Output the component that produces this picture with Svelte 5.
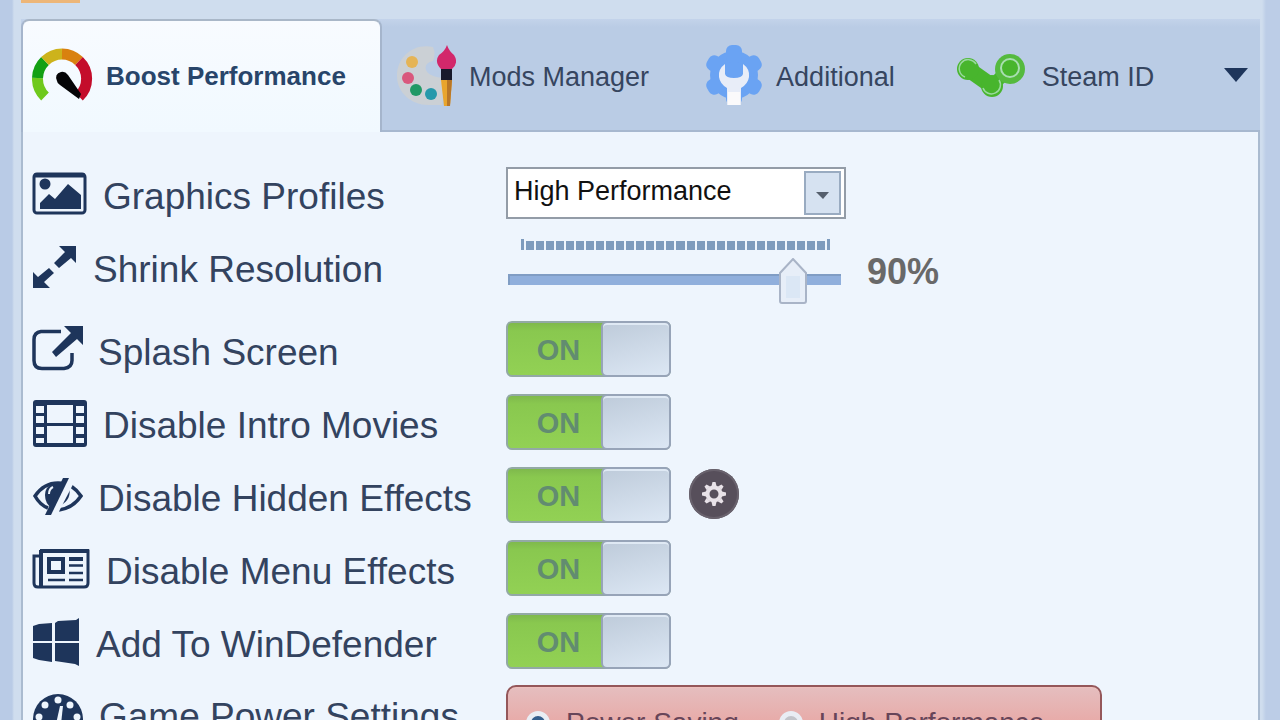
<script>
  let profile = $state('High Performance');
  let resolution = $state(90);
  let power = $state('saving');

  let toggles = $state([
    { id: 'splash', label: 'Splash Screen', icon: 'external', on: true },
    { id: 'intro', label: 'Disable Intro Movies', icon: 'film', on: true },
    { id: 'hidden', label: 'Disable Hidden Effects', icon: 'eye', on: true, settings: true },
    { id: 'menu', label: 'Disable Menu Effects', icon: 'news', on: true },
    { id: 'defender', label: 'Add To WinDefender', icon: 'windows', on: true }
  ]);

  const ticks = Array.from({ length: 32 }, (_, i) => i);
  const teeth = [0, 60, 120, 180, 240, 300];
  const cogs = [0, 45, 90, 135, 180, 225, 270, 315];
</script>

{#snippet glyph(name)}
  {#if name === 'image'}
    <svg width="56" height="44" viewBox="0 0 56 44" aria-hidden="true">
      <rect x="2" y="2" width="51" height="39" rx="3" fill="none" stroke="currentColor" stroke-width="3" />
      <path d="M2 3.500h51" stroke="currentColor" stroke-width="4" />
      <circle cx="13" cy="12" r="5.500" />
      <path d="M8 37v-6l9-9 6 5 13-15 13 11v14z" />
    </svg>
  {:else if name === 'resize'}
    <svg width="46" height="44" viewBox="0 0 46 44" aria-hidden="true">
      <path d="M27 1h17v17l-5-5-12 10-5-5 11-11zM1 43V27l5 5 11-9 5 5-10 9 6 6z" />
    </svg>
  {:else if name === 'external'}
    <svg width="51" height="47" viewBox="0 0 51 47" aria-hidden="true">
      <path d="M29 5.500H9q-7 1-7 8v21q0 8 8 8h22q8-1 8-8V27" fill="none" stroke="currentColor" stroke-width="3.500" />
      <path d="M32 0h19v19l-6-6-21 18-4-5L39 7z" />
    </svg>
  {:else if name === 'film'}
    <svg width="56" height="48" viewBox="0 0 56 48" aria-hidden="true">
      <path d="M4 1h48q3 0 3 3v41q0 3-3 3H4q-3 0-3-3V4q0-3 3-3zm0 6v7h8V7zm0 10v7h8v-7zm0 11v7h8v-7zm0 11v5h8v-5zM44 7v7h8V7zm0 10v7h8v-7zm0 11v7h8v-7zm0 11v5h8v-5zM15 6v18h26V6zm0 21v17h26V27z" fill-rule="evenodd" />
    </svg>
  {:else if name === 'eye'}
    <svg width="51" height="38" viewBox="0 0 51 38" aria-hidden="true">
      <path d="M16 31Q8 28 3 19 12 6 26 6q4 0 7 1M39 9q6 4 10 10Q41 31 27 33" fill="none" stroke="currentColor" stroke-width="3.500" />
      <path d="M31 7L20 31Q13 27 13 18q0-9 9-11z" />
      <path d="M21 10q-4 2-4 7" fill="none" stroke="#eef5fd" stroke-width="2" />
      <path d="M31 1h6L19 38h-6z" />
      <path d="M37 10q3 12-8 18z" />
      <path d="M40 6L25 35" stroke="#eef5fd" stroke-width="3" />
    </svg>
  {:else if name === 'news'}
    <svg width="59" height="42" viewBox="0 0 59 42" aria-hidden="true">
      <path d="M9 3h47v32q0 4-4 4H6q-4 0-4-4V8h6" fill="none" stroke="currentColor" stroke-width="3" />
      <path d="M9 2v37M8 3h49" fill="none" stroke="currentColor" stroke-width="4" />
      <path d="M17 11h14v13H17z" fill="none" stroke="currentColor" stroke-width="4" />
      <path d="M37 11h14" stroke="currentColor" stroke-width="4" />
      <path d="M37 17.500h14M37 25h14M16 32h17M37 32h14" stroke="currentColor" stroke-width="2.500" />
    </svg>
  {:else if name === 'windows'}
    <svg width="49" height="48" viewBox="0 0 49 48" aria-hidden="true">
      <path d="M1 8l6-2 13-1v18H1zM23 5l3-2 18-1 3-2v23H23zM1 25h19v19L7 42l-6-2zM23 25h24v23l-4-2-20-3z" />
    </svg>
  {:else if name === 'dial'}
    <svg width="52" height="60" viewBox="0 -10 52 60" aria-hidden="true">
      <circle cx="26" cy="26" r="25" />
      <g fill="#eef5fd">
        <circle cx="26" cy="7" r="3.500" />
        <circle cx="13" cy="12" r="3.500" />
        <circle cx="38" cy="12" r="3.500" />
        <circle cx="7" cy="24" r="3.500" />
        <circle cx="45" cy="24" r="3.500" />
        <path d="M28 13h3l-2 18h-5z" />
      </g>
    </svg>
  {/if}
{/snippet}

<div class="window">
  <header class="titlebar"><span class="app-mark"></span></header>

  <div class="tabs" role="tablist">
    <button class="tab active" role="tab" aria-selected="true">
      <svg width="62" height="58" viewBox="1 1 62 58" aria-hidden="true">
        <g fill="none" stroke-width="11">
          <path d="M14 49.500A24.500 24.500 0 0 1 6.500 31" stroke="#6fc91d" />
          <path d="M6.500 31A24.500 24.500 0 0 1 14 14" stroke="#13a014" />
          <path d="M14 14A24.500 24.500 0 0 1 31 7" stroke="#cdb31b" />
          <path d="M31 7A24.500 24.500 0 0 1 48 14" stroke="#d9810f" />
          <path d="M48 14A24.500 24.500 0 0 1 48 49.500" stroke="#c40d2b" />
        </g>
        <path d="M26 34q-3-7 4-9 4-1 7 3l13 19-2 5-19-14q-3-2-3-4z" fill="#050507" />
      </svg>
      <span>Boost Performance</span>
    </button>

    <button class="tab" role="tab" aria-selected="false">
      <svg width="60" height="62" viewBox="0 0 60 62" aria-hidden="true">
        <path d="M37 3C16-1 1 14 1 32c0 17 15 29 31 29h14l3-27q-16-1-19-8-2-7 7-9 3-7 0-14z" fill="#cbd0d5" />
        <circle cx="16" cy="18" r="6" fill="#e5b456" />
        <circle cx="12" cy="34" r="6" fill="#d9587d" />
        <circle cx="20" cy="46" r="6" fill="#209966" />
        <circle cx="35" cy="50" r="6" fill="#2699ab" />
        <path d="M51 1q2 6 7 10 5 8-2 14H45q-7-7-2-14 6-4 8-10z" fill="#d2286b" />
        <path d="M45 25h11v11H45z" fill="#17192b" />
        <path d="M45 36h11l-2 26h-6z" fill="#e9a52d" />
        <path d="M51 36h5l-2 26h-3z" fill="#b97728" />
      </svg>
      <span>Mods Manager</span>
    </button>

    <button class="tab" role="tab" aria-selected="false">
      <svg width="58" height="62" viewBox="0 0 58 62" aria-hidden="true">
        <g fill="#6aa3f3">
          <circle cx="29" cy="31" r="24" />
          {#each teeth as angle}
            <rect x="21" y="1" width="16" height="18" rx="6" transform="rotate({angle} 29 31)" />
          {/each}
        </g>
        <path d="M20 20v10q1 4 9 4t9-4V20q7 5 6 13-1 7-8 11v17H22V44q-7-4-8-11-1-8 6-13z" fill="#e8edf8" />
        <path d="M23 48h12v13H23z" fill="#fbfafb" />
      </svg>
      <span>Additional</span>
    </button>

    <button class="tab" role="tab" aria-selected="false">
      <svg width="78" height="48" viewBox="-5 0 78 48" aria-hidden="true">
        <g fill="none" stroke="#48b52d" stroke-width="16" stroke-linecap="round">
          <path d="M12 18l24 17" />
          <path d="M36 35l18-18" stroke-width="13" />
        </g>
        <circle cx="12" cy="18" r="11" fill="#48b52d" />
        <circle cx="36" cy="35" r="11" fill="#48b52d" />
        <circle cx="54" cy="18" r="15" fill="#55ba3e" />
        <circle cx="54" cy="17" r="9" fill="#48b52d" stroke="#a8deb1" stroke-width="2" />
        <path d="M20 13A9 9 0 1 0 9 26M27 37A9 9 0 1 0 43 29" fill="none" stroke="#9bd9a0" stroke-width="1.500" />
      </svg>
      <span>Steam ID</span>
    </button>

    <button class="more" aria-label="More tabs">
      <svg width="24" height="14" viewBox="0 0 24 14" aria-hidden="true"><path d="M0 0h24L12 14z" /></svg>
    </button>
  </div>

  <main class="page">
    <div class="row">
      <label class="name" for="profile">{@render glyph('image')}<span>Graphics Profiles</span></label>
      <div class="control">
        <select id="profile" bind:value={profile}>
          <option>High Performance</option>
          <option>Balanced</option>
          <option>High Quality</option>
        </select>
      </div>
    </div>

    <div class="row tall">
      <label class="name" for="resolution">{@render glyph('resize')}<span>Shrink Resolution</span></label>
      <div class="control">
        <div class="slider">
          <div class="ticks" aria-hidden="true">{#each ticks as t (t)}<i></i>{/each}</div>
          <input id="resolution" type="range" min="10" max="100" bind:value={resolution} />
        </div>
        <output for="resolution">{resolution}%</output>
      </div>
    </div>

    {#each toggles as item (item.id)}
      <div class="row">
        <label class="name" for={item.id}>{@render glyph(item.icon)}<span>{item.label}</span></label>
        <div class="control">
          <button id={item.id} class="switch" class:off={!item.on} role="switch" aria-checked={item.on} onclick={() => (item.on = !item.on)}>
            <span class="state">{item.on ? 'ON' : 'OFF'}</span>
            <span class="knob"></span>
          </button>
          {#if item.settings}
            <button class="gear" aria-label="Hidden effects settings">
              <svg width="24" height="24" viewBox="0 0 24 24" aria-hidden="true">
                <circle cx="12" cy="12" r="6.500" fill="none" stroke="#e8e2e8" stroke-width="4" />
                {#each cogs as angle}
                  <path d="M9.500 4l1-4h3l1 4z" fill="#e8e2e8" transform="rotate({angle} 12 12)" />
                {/each}
              </svg>
            </button>
          {/if}
        </div>
      </div>
    {/each}

    <div class="row last">
      <div class="name" id="power-label">{@render glyph('dial')}<span>Game Power Settings</span></div>
      <div class="power" role="radiogroup" aria-labelledby="power-label">
        <label><input type="radio" name="power" value="saving" bind:group={power} />Power Saving</label>
        <label><input type="radio" name="power" value="high" bind:group={power} />High Performance</label>
      </div>
    </div>
  </main>
</div>

<style>
  :global(body) {
    margin: 0;
    overflow: hidden;
  }

  .window,
  .window * {
    box-sizing: border-box;
  }

  .window {
    display: flex;
    flex-direction: column;
    height: 100vh;
    overflow: hidden;
    padding: 0 20px 0 21px;
    background: linear-gradient(90deg, #b9cbe6 12px, #cfddee 14px, #cfddee calc(100% - 18px), #bccde7 calc(100% - 14px));
    color: #1e355b;
    font-family: "Liberation Sans", Arial, sans-serif;
  }

  button {
    padding: 0;
    border: 0;
    background: none;
    color: inherit;
    font: inherit;
  }

  svg {
    display: block;
    flex: none;
    fill: currentColor;
  }

  .titlebar {
    flex: none;
    height: 19px;
  }

  .app-mark {
    display: block;
    width: 59px;
    height: 3px;
    background: #edb678;
  }

  .tabs {
    flex: none;
    display: flex;
    height: 113px;
    background: linear-gradient(#c3d3ea, #bacce5 8px);
    box-shadow: inset 0 -3px 0 -1px #a7b8cf;
  }

  .tab {
    display: flex;
    align-items: center;
    gap: 13px;
    padding: 0 42px 2px 14px;
    color: #36455f;
    font-size: 27px;
    white-space: nowrap;
  }

  .tab span {
    padding-top: 6px;
  }

  .tab.active {
    gap: 12px;
    width: 361px;
    padding: 0 10px 0 9px;
    border: 2px solid #a5b5cc;
    border-top-color: #a9b7c8;
    border-bottom: 0;
    border-radius: 8px 8px 0 0;
    background: linear-gradient(#f8fbff, #f1f9ff);
    color: #28456a;
    font-size: 26px;
    font-weight: bold;
  }

  .tab.active span {
    padding-top: 0;
  }

  .more {
    margin-left: auto;
    padding: 0 12px 2px 0;
  }

  .page {
    flex: 1 0 auto;
    padding: 24px 0 0 9px;
    border: 2px solid #aabbd0;
    border-top: 0;
    background: #eef5fd;
  }

  .row {
    display: grid;
    grid-template-columns: 474px 1fr;
    align-items: center;
    height: 73px;
  }

  .row.tall {
    height: 83px;
    padding-bottom: 10px;
  }

  .row.tall .control {
    padding-top: 12px;
  }

  .row.last {
    align-items: start;
    height: 92px;
    padding-top: 8px;
  }

  .name {
    display: flex;
    align-items: center;
    gap: 15px;
    padding-top: 4px;
    color: #1e355b;
    font-size: 37px;
    line-height: 44px;
    white-space: nowrap;
  }

  .row.last .name {
    margin-top: -4px;
    padding-top: 2px;
  }

  .name span {
    padding-top: 5px;
    color: #33435f;
  }

  .name svg {
    margin-bottom: 2px;
  }

  .control {
    display: flex;
    align-items: center;
  }

  select {
    appearance: none;
    width: 340px;
    height: 52px;
    padding: 0 44px 4px 6px;
    border: 2px solid #939ca7;
    border-radius: 0;
    background:
      url("data:image/svg+xml,%3Csvg xmlns='http://www.w3.org/2000/svg' width='37' height='44'%3E%3Crect x='1' y='1' width='35' height='42' fill='%23d6e2f1' stroke='%2399abc1' stroke-width='2'/%3E%3Cpath d='M12 21h13l-6 7z' fill='%23555f6d'/%3E%3C/svg%3E") right 3px center no-repeat,
      #fff;
    color: #111;
    font: 27px "Liberation Sans", Arial, sans-serif;
  }

  .slider {
    width: 338px;
    padding-left: 2px;
  }

  .ticks {
    display: flex;
    gap: 2px;
    height: 9px;
    margin: 0 14px 0 13px;
  }

  .ticks i {
    flex: 1;
    background: #7d9bbd;
  }

  .ticks i:first-child,
  .ticks i:last-child {
    flex: 0 0 3px;
    margin-top: -2px;
  }

  input[type="range"] {
    appearance: none;
    display: block;
    width: 333px;
    height: 46px;
    margin: 6px 0 0;
    background: none;
  }

  input[type="range"]::-webkit-slider-runnable-track {
    height: 11px;
    border-top: 2px solid #809dc4;
    border-left: 2px solid #809dc4;
    background: #90afdc;
  }

  input[type="range"]::-webkit-slider-thumb {
    appearance: none;
    width: 28px;
    height: 46px;
    margin-top: -18px;
    background: url("data:image/svg+xml,%3Csvg xmlns='http://www.w3.org/2000/svg' width='28' height='46'%3E%3Cpath d='M14 1L27 15v28q0 2-2 2H3q-2 0-2-2V15z' fill='%23e7eef8' stroke='%23a9b4c7' stroke-width='2'/%3E%3Cpath d='M7 18h14v22H7z' fill='%23dbe7f5'/%3E%3C/svg%3E") no-repeat;
  }

  output {
    padding-left: 23px;
    color: #696969;
    font-size: 36px;
    font-weight: bold;
  }

  .switch {
    display: flex;
    width: 165px;
    height: 56px;
    border: 2px solid #93a9a5;
    border-radius: 6px;
    background: linear-gradient(#7fb94c, #89c84f 8px, #92d154);
    color: #628c70;
    font-size: 29px;
    font-weight: bold;
  }

  .switch.off {
    flex-direction: row-reverse;
    background: #c8d1dc;
  }

  .state {
    flex: 1;
    align-self: center;
    padding: 4px 0 0 6px;
    text-align: center;
  }

  .knob {
    width: 70px;
    height: 56px;
    margin: -2px;
    border: 2px solid #97a4b8;
    border-radius: 6px;
    background: linear-gradient(165deg, #becbda, #dce7f4);
    box-shadow: inset 0 2px 0 #dfe9f4;
  }

  .gear {
    display: grid;
    place-items: center;
    width: 50px;
    height: 50px;
    margin: -1px 0 0 18px;
    border-radius: 50%;
    background: #574f5b;
    box-shadow: inset 0 0 0 2px #69626d;
  }

  .power {
    display: flex;
    gap: 40px;
    width: 596px;
    height: 76px;
    padding: 18px 18px 0;
    border: 2px solid #94575a;
    border-radius: 10px;
    background: linear-gradient(#e5bebf, #e8a8a5 40px);
    box-shadow: inset 0 1px 0 #efc0bd;
    color: #674559;
    font-size: 28px;
    line-height: 36px;
  }

  .power label {
    display: flex;
    align-items: center;
    gap: 16px;
    height: 36px;
    white-space: nowrap;
  }

  .power input {
    appearance: none;
    width: 24px;
    height: 24px;
    margin: 0;
    border: 5px solid #e9edf4;
    border-radius: 50%;
    background: #c2c4ca;
  }

  .power input:checked {
    background: #345e8c;
  }
</style>
